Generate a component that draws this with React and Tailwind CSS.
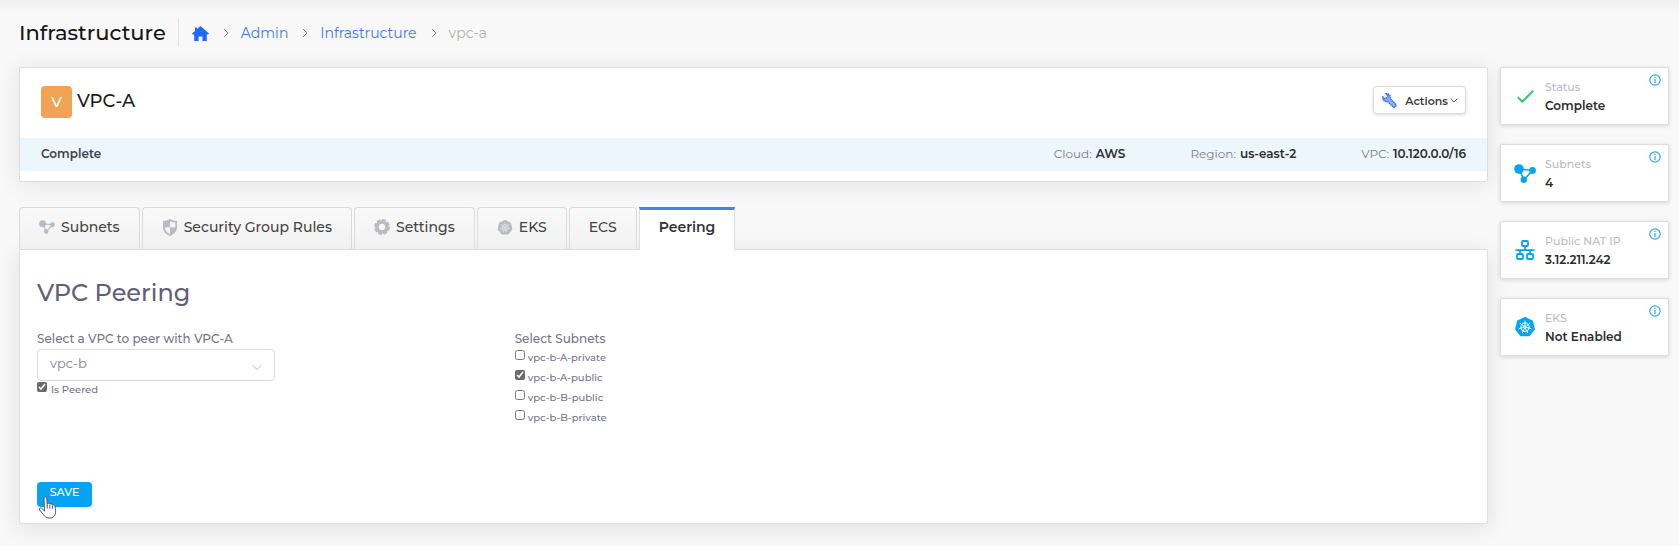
import React from "react";

const Chevron = ({ className, d = "M2 4.5 6 8.5l4-4" }) => (
  <svg viewBox="0 0 12 12" className={className} fill="none" stroke="currentColor" strokeWidth="1" aria-hidden="true">
    <path d={d} />
  </svg>
);

const HomeIcon = () => (
  <svg viewBox="0 0 17 15" className="h-[15px] w-[17px] fill-[#1f6bff]" aria-hidden="true">
    <path d="M8.5 0 17 7.6l-.8.9h-1.4v6.5h-4.4v-4.6H6.6V15H2.2V8.500H.8L0 7.600 3 4.900V1.500h2v1.600Z" />
  </svg>
);

const NodesIcon = ({ className }) => (
  <svg viewBox="0 0 22 19" className={className} aria-hidden="true">
    <path d="M5 5 18.500 6.300 10 15.800Z" fill="none" stroke="currentColor" strokeWidth="1.500" />
    <circle cx="5" cy="5" r="4.800" fill="currentColor" />
    <circle cx="18.500" cy="6.400" r="3.400" fill="currentColor" />
    <circle cx="9.800" cy="15.700" r="3.200" fill="currentColor" />
  </svg>
);

const ShieldIcon = ({ className }) => (
  <svg viewBox="0 0 14 17" className={className} aria-hidden="true">
    <path fill="currentColor" d="M7 0c2 1.300 4.400 2 7 2v6.200c0 4-2.800 7.100-7 8.800-4.200-1.700-7-4.800-7-8.800V2c2.600 0 5-.7 7-2Z" />
    <path fill="#f4f4f4" d="M7 2.200V8.300h5.300V3.500C10.300 3.400 8.600 3 7 2.200ZM1.800 8.300H7V15C3.800 13.500 2 11.200 1.800 8.300Z" />
  </svg>
);

const CogIcon = ({ className }) => (
  <svg viewBox="0 0 16 16" className={className} aria-hidden="true">
    <circle cx="8" cy="8" r="5" fill="none" stroke="currentColor" strokeWidth="3.600" />
    <circle cx="8" cy="8" r="7" fill="none" stroke="currentColor" strokeWidth="1.800" strokeDasharray="3.700 1.798" />
  </svg>
);

const WheelIcon = ({ className, inner }) => (
  <svg viewBox="0 0 20 20" className={className} aria-hidden="true">
    <path d="m10 .8 7.300 3.500 1.800 7.900-5 6.400H5.900l-5-6.400 1.800-7.900Z" fill="currentColor" stroke="currentColor" strokeWidth="1.500" strokeLinejoin="round" />
    <g className={inner} fill="none" strokeWidth="1">
      <circle cx="10" cy="10.200" r="4.200" />
      <circle cx="10" cy="10.200" r="1" />
      <path d="M10 9.200V3.700M10.800 9.600l4.300-3.500M11 10.400l5.400 1.300M10.400 11.100l2.400 5M9.600 11.100l-2.400 5M9 10.400l-5.400 1.300M9.200 9.600 4.900 6.100" />
    </g>
  </svg>
);

const NetworkIcon = () => (
  <svg viewBox="0 0 20 20" className="h-5 w-5 text-[#06a3f0]" fill="none" stroke="currentColor" strokeWidth="1.800" aria-hidden="true">
    <rect x="7" y="1" width="6" height="5" rx="1" />
    <rect x="2" y="14" width="6" height="5" rx="1" />
    <rect x="12" y="14" width="6" height="5" rx="1" />
    <path d="M10 6v4M.5 10.200h19M5 10.200v4M15 10.200v4" />
  </svg>
);

const CheckIcon = () => (
  <svg viewBox="0 0 17 13" className="h-[13px] w-[17px]" fill="none" stroke="#2ecc71" strokeWidth="2" aria-hidden="true">
    <path d="m.8 7.200 4.500 4.500L16.200.8" />
  </svg>
);

const InfoIcon = () => (
  <svg viewBox="0 0 12 12" className="h-3 w-3" fill="none" stroke="#2aa9ee" strokeWidth="1.200" aria-hidden="true">
    <circle cx="6" cy="6" r="5.200" />
    <path d="M6 5v4M6 2.800v1.200" />
  </svg>
);

const WrenchIcon = () => (
  <svg viewBox="0 0 15 15" className="h-[15px] w-[15px]" aria-hidden="true">
    <path d="M4.200.8 5.800 2.400 4.900 4.600 2.500 5.400.9 3.900C.2 6.800 2.800 9 5.400 8.300l5.700 5.600c1.600 1.200 3.700-.8 2.600-2.500L8.200 5.800C9 3 6.800.3 4.200.8Z" fill="#8fb2fb" stroke="#2f6bf0" strokeWidth="1.400" strokeDasharray="1.600 .5" />
  </svg>
);

const PointerIcon = () => (
  <svg viewBox="0 0 20 23" className="absolute top-[14px] left-px h-[23px] w-5" aria-hidden="true">
    <path d="M6 2c0-1.800 2.500-1.800 2.700 0l.5 6c.5-1.300 2.500-1 2.600.3.700-1 2.500-.7 2.600.7.900-.7 2.300-.1 2.500 1.200.6 2.500 1.100 5.700.4 8-.8 2.200-2.600 3.800-5.500 3.900-3 .1-4.800-1.200-6.300-3.400L1.600 14c-.9-1.400.7-2.700 2.100-1.600L6.500 15Z" fill="white" stroke="#4a5568" strokeWidth="1" strokeLinejoin="round" />
    <path d="M9.200 8v4.500M11.900 8.800v3.800M14.500 9.500v3.300" stroke="#4a5568" strokeWidth="1" />
  </svg>
);

const crumbs = ["Admin", "Infrastructure"];
const details = [
  ["Cloud", "AWS"],
  ["Region", "us-east-2"],
  ["VPC", "10.120.0.0/16"],
];
const tabs = [
  { label: "Subnets", icon: <NodesIcon className="h-[14px] w-4 text-[#b9bbbe]" /> },
  { label: "Security Group Rules", icon: <ShieldIcon className="h-[17px] w-4 text-[#b9bbbe]" /> },
  { label: "Settings", icon: <CogIcon className="h-4 w-4 text-[#b9bbbe]" /> },
  { label: "EKS", icon: <WheelIcon className="h-[15px] w-4 text-[#b9bbbe]" inner="stroke-[#e4e5e6]" /> },
  { label: "ECS" },
  { label: "Peering", active: true },
];
const subnets = ["vpc-b-A-private", "vpc-b-A-public", "vpc-b-B-public", "vpc-b-B-private"];
const stats = [
  { label: "Status", value: "Complete", icon: <CheckIcon /> },
  { label: "Subnets", value: "4", icon: <NodesIcon className="h-[19px] w-[22px] text-[#06a3f0]" /> },
  { label: "Public NAT IP", value: "3.12.211.242", icon: <NetworkIcon /> },
  { label: "EKS", value: "Not Enabled", icon: <WheelIcon className="h-5 w-5 text-[#06a3f0]" inner="stroke-white" /> },
];

function Header() {
  return (
    <header className="flex items-center bg-linear-to-b from-[#eeeeee] from-0% to-[#f8f8f8] to-20% pt-[19px] pb-5 pl-[19px]">
      <h1 className="pr-3 text-[21px] leading-7 font-medium text-[#151515]">Infrastructure</h1>
      <nav aria-label="Breadcrumb" className="flex h-7 items-center border-l border-[#dddfe4] pl-[13px] text-sm">
        <a href="#home" aria-label="Home">
          <HomeIcon />
        </a>
        {crumbs.map((c) => (
          <React.Fragment key={c}>
            <Chevron d="m4 2 4 4-4 4" className="mr-[9px] ml-[11px] h-3 w-3 text-[#888]" />
            <a href={"#" + c.toLowerCase()} className="text-[#3f78ee]">{c}</a>
          </React.Fragment>
        ))}
        <Chevron d="m4 2 4 4-4 4" className="mr-[9px] ml-[11px] h-3 w-3 text-[#888]" />
        <span className="text-[#b0b0b0]">vpc-a</span>
      </nav>
    </header>
  );
}

function Summary() {
  return (
    <section className="rounded-xs border border-[#dedede] bg-white pb-[10px] shadow-[0_2px_24px_rgba(0,0,0,0.09)]">
      <div className="flex items-start justify-between px-[21px] pt-[18px] pb-5">
        <div className="flex items-center gap-[5px]">
          <span className="flex h-8 w-[31px] items-center justify-center rounded-sm bg-[#f0a354] text-[15px] font-medium text-white">V</span>
          <h2 className="pb-[2px] text-lg font-medium text-[#1c1c1c]">VPC-A</h2>
        </div>
        <button type="button" className="flex h-7 items-center rounded-sm border border-[#dcdcdc] bg-white pr-[6px] pl-2 text-[11px] font-semibold text-[#3c3c3c] shadow-[0_1px_3px_rgba(0,0,0,0.15)]">
          <WrenchIcon />
          <span className="mr-px ml-2 pt-[2px]">Actions</span>
          <Chevron className="h-[10px] w-[10px]" />
        </button>
      </div>
      <div className="flex h-[33px] items-center justify-between bg-[#edf5fd] px-[21px] pb-[2px] text-xs">
        <span className="font-semibold text-[#3f4347]">Complete</span>
        <dl className="flex gap-[65px] text-[#7c8085]">
          {details.map(([k, v]) => (
            <div key={k} className="flex gap-1">
              <dt>{k}:</dt>
              <dd className="font-semibold text-[#2c2f33]">{v}</dd>
            </div>
          ))}
        </dl>
      </div>
    </section>
  );
}

function Tabs() {
  return (
    <div role="tablist" className="relative flex gap-[2px]">
      {tabs.map((t) => (
        <button
          key={t.label}
          type="button"
          role="tab"
          aria-selected={!!t.active}
          className={
            t.active
              ? "-mb-px flex h-[43px] items-center border-x border-t-3 border-x-[#dedede] border-t-[#4a7fee] bg-white px-[19px] pb-[6px] text-sm font-semibold text-[#333]"
              : "flex h-[42px] items-center gap-[6px] rounded-t-sm border border-b-0 border-[#dadada] bg-linear-to-b from-[#f9f9f9] to-[#f1f1f1] px-[19px] pb-[3px] text-sm font-medium text-[#444]"
          }
        >
          {t.icon}
          {t.label}
        </button>
      ))}
    </div>
  );
}

function Peering() {
  return (
    <section role="tabpanel" className="rounded-xs border border-[#dedede] bg-white px-[17px] pt-[25px] pb-4 text-[#77728a] shadow-[0_4px_24px_rgba(0,0,0,0.1)]">
      <h2 className="text-2xl leading-9 font-medium text-[#625d78]">VPC Peering</h2>
      <form>
        <div className="mt-[18px] grid min-h-[134px] grid-cols-3 items-start">
          <div>
            <label htmlFor="vpc" className="block text-xs leading-5 font-medium">Select a VPC to peer with VPC-A</label>
            <div className="relative w-[238px]">
              <select id="vpc" defaultValue="vpc-b" className="block h-8 w-full appearance-none rounded-sm border border-[#d9d9e0] bg-white pb-[2px] pl-3 text-[13px] text-[#80808c]">
                <option>vpc-b</option>
              </select>
              <Chevron className="pointer-events-none absolute top-3 right-3 h-3 w-3 text-[#b5b5bd]" />
            </div>
            <label className="flex h-4 text-[10px] leading-[18px] font-medium">
              <input type="checkbox" defaultChecked className="mt-px mr-1 h-[10px] w-[10px] accent-[#6a6a6a]" />
              Is Peered
            </label>
          </div>
          <fieldset>
            <legend className="text-xs leading-5 font-medium">Select Subnets</legend>
            {subnets.map((s) => (
              <label key={s} className="flex h-5 text-[10px] leading-[18px] font-medium">
                <input type="checkbox" defaultChecked={s === "vpc-b-A-public"} className="mt-px mr-[3px] h-[10px] w-[10px] accent-[#6a6a6a]" />
                {s}
              </label>
            ))}
          </fieldset>
        </div>
        <div className="relative mt-[19px] w-fit">
          <button type="button" className="block h-[25px] w-[55px] rounded-sm bg-[#05a3f1] pb-1 text-[11px] font-medium text-white">SAVE</button>
          <PointerIcon />
        </div>
      </form>
    </section>
  );
}

function Stat({ label, value, icon }) {
  return (
    <section className="relative flex h-[58px] items-center rounded-xs border border-[#dedede] bg-white shadow-[0_1px_4px_rgba(0,0,0,0.14)]">
      <div className="flex w-11 justify-center pl-1">{icon}</div>
      <div>
        <h3 className="text-[11px] leading-5 font-medium text-[#bcbcc6]">{label}</h3>
        <p className="text-xs leading-[18px] font-semibold text-[#2c2c2c]">{value}</p>
      </div>
      <button type="button" aria-label={"About " + label} className="absolute top-[6px] right-[7px]">
        <InfoIcon />
      </button>
    </section>
  );
}

export default function App() {
  return (
    <div className="min-h-screen bg-[#f8f8f8] font-['Montserrat','Inter',sans-serif] text-[#333]">
      <Header />
      <div className="flex items-start gap-3 pr-[10px] pb-5 pl-[19px]">
        <main className="min-w-0 flex-1">
          <Summary />
          <div className="mt-[25px]">
            <Tabs />
            <Peering />
          </div>
        </main>
        <aside className="flex w-[169px] shrink-0 flex-col gap-[19px]">
          {stats.map((s) => (
            <Stat key={s.label} {...s} />
          ))}
        </aside>
      </div>
    </div>
  );
}
